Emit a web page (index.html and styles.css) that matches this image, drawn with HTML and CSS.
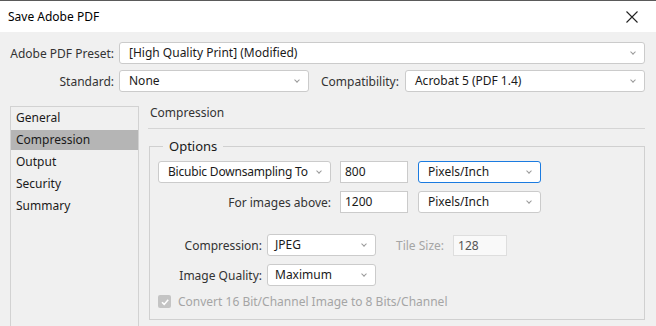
FILE: index.html
```html
<!DOCTYPE html>
<html>
<head>
<meta charset="UTF-8">
<title>Save Adobe PDF</title>
<link rel="stylesheet" href="styles.css">
</head>
<body>
<div class="dialog">
  <header class="titlebar">
    <span class="title">Save Adobe PDF</span>
    <svg class="close" width="12" height="12" viewBox="0 0 12 12"><path d="M0.5 0.5 L11.5 11.5 M11.5 0.5 L0.5 11.5" stroke="#222" stroke-width="1.1" fill="none"/></svg>
  </header>

  <div class="content">
    <div class="presets">
      <div class="row">
        <span class="lbl">Adobe PDF Preset:</span>
        <div class="select grow">[High Quality Print] (Modified)</div>
      </div>
      <div class="row">
        <span class="lbl">Standard:</span>
        <div class="select std">None</div>
        <span class="lbl-compat">Compatibility:</span>
        <div class="select grow">Acrobat 5 (PDF 1.4)</div>
      </div>
    </div>

    <div class="main">
      <ul class="sidebar">
        <li>General</li>
        <li class="active">Compression</li>
        <li>Output</li>
        <li>Security</li>
        <li>Summary</li>
      </ul>

      <section class="panel">
        <h2 class="panel-title">Compression</h2>
        <fieldset class="options">
          <legend>Options</legend>
          <div class="frow">
            <div class="select sampling">Bicubic Downsampling To</div>
            <div class="input num">800</div>
            <div class="select unit focused">Pixels/Inch</div>
          </div>
          <div class="frow second">
            <span class="flbl above">For images above:</span>
            <div class="input num">1200</div>
            <div class="select unit">Pixels/Inch</div>
          </div>
          <div class="frow third">
            <span class="flbl short">Compression:</span>
            <div class="select small">JPEG</div>
            <span class="tile-lbl">Tile Size:</span>
            <div class="input tile">128</div>
          </div>
          <div class="frow fourth">
            <span class="flbl short">Image Quality:</span>
            <div class="select small">Maximum</div>
          </div>
          <div class="frow check">
            <span class="checkbox"><svg width="12" height="12" viewBox="0 0 12 12"><path d="M3 6.2 L5.2 8.4 L9.2 3.8" stroke="#fff" stroke-width="1.6" fill="none"/></svg></span>
            <span class="check-lbl">Convert 16 Bit/Channel Image to 8 Bits/Channel</span>
          </div>
        </fieldset>
      </section>
    </div>
  </div>
</div>
</body>
</html>
```

FILE: styles.css
```css
* {
  margin: 0;
  padding: 0;
  box-sizing: border-box;
}

body {
  background: #f0f0f0;
  font-family: "Noto Sans", "Open Sans", sans-serif;
  font-size: 12px;
  color: #1a1a1a;
  overflow: hidden;
}

.dialog {
  width: 656px;
  height: 326px;
  overflow: hidden;
}

/* barra de titulo */
.titlebar {
  height: 32px;
  background: #fff;
  border-top: 1px solid #5a5a5a;
  display: flex;
  align-items: center;
  justify-content: space-between;
  padding: 0 18px 0 8px;
}

.title {
  font-size: 12px;
  color: #000;
}

.content {
  padding: 10px 11px 0 10px;
}

.presets {
  display: flex;
  flex-direction: column;
  gap: 6px;
}

.row {
  display: flex;
  align-items: center;
}

.lbl {
  width: 104px;
  text-align: right;
  margin-right: 5px;
  color: #333;
}

.lbl-compat {
  margin: 0 6px 0 12px;
  color: #333;
}

/* desplegables */
.select {
  position: relative;
  height: 22px;
  line-height: 20px;
  background: #fff;
  border: 1px solid #cbcbcb;
  border-radius: 3px;
  padding-left: 9px;
  white-space: nowrap;
}

.select::after {
  content: "";
  position: absolute;
  right: 9px;
  top: 7px;
  width: 3px;
  height: 3px;
  border-right: 1px solid #999;
  border-bottom: 1px solid #999;
  transform: rotate(45deg);
}

.select.grow { flex: 1; }
.select.std { width: 190px; }

.select.focused {
  border-color: #1b7be0;
}

.input {
  height: 22px;
  line-height: 20px;
  background: #fff;
  border: 1px solid #cbcbcb;
  padding-left: 4px;
}

.main {
  display: flex;
  margin-top: 14px;
}

.sidebar {
  list-style: none;
  width: 129px;
  height: 240px;
  border: 1px solid #d2d2d2;
  padding-top: 1px;
  display: flex;
  flex-direction: column;
  gap: 2px;
}

.sidebar li {
  height: 20px;
  line-height: 20px;
  padding-left: 5px;
}

.sidebar li.active {
  background: #b5b5b5;
}

.panel {
  flex: 1;
  margin-left: 9px;
}

.panel-title {
  font-size: 12px;
  font-weight: normal;
  color: #333;
  line-height: 13px;
  padding: 0 0 9px 2px;
  border-bottom: 1px solid #d5d5d5;
  margin-bottom: 9px;
}

.options {
  margin-left: 1px;
  border: 1px solid #d0d0d0;
  padding: 0 0 9px 8px;
}

.options legend {
  margin-left: 5px;
  padding: 0 6px;
  font-size: 13px;
  line-height: 17px;
}

.frow {
  display: flex;
  align-items: center;
}

.frow:first-of-type { margin-top: 6px; }
.frow.second { margin-top: 8px; }
.frow.third { margin-top: 21px; }
.frow.fourth { margin-top: 8px; }
.frow.check { margin-top: 7px; }

.select.sampling {
  width: 173px;
  margin-right: 9px;
  letter-spacing: -0.2px;
}
.input.num { width: 68px; margin-right: 10px; }
.select.unit { width: 123px; }
.select.small { width: 109px; padding-left: 7px; }

.flbl {
  text-align: right;
  color: #333;
}

.flbl.above { width: 173px; margin-right: 9px; }
.flbl.short { width: 104px; margin-right: 5px; }

.tile-lbl {
  margin: 0 9px 0 20px;
  color: #a5a5a5;
}

.input.tile {
  width: 54px;
  height: 21px;
  line-height: 19px;
  background: #f9f9f9;
  border-color: #dedede;
  color: #555;
}

.checkbox {
  width: 13px;
  height: 13px;
  border-radius: 2px;
  background: #c4c4c4;
  display: flex;
  align-items: center;
  justify-content: center;
  margin-right: 7px;
}

.check-lbl {
  color: #a5a5a5;
}
```
